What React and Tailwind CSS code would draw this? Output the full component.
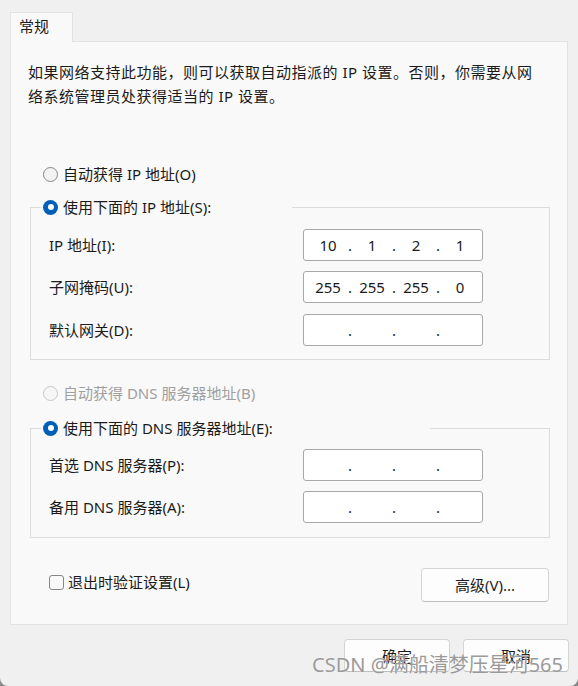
import React from "react";

const font = "font-['Noto_Sans','Noto_Sans_CJK_SC',sans-serif]";

function Radio({ checked, disabled }) {
  if (checked) {
    return (
      <span className="flex h-[15px] w-[15px] shrink-0 items-center justify-center rounded-full bg-[#005fb8]">
        <span className="h-[6px] w-[6px] rounded-full bg-white" />
      </span>
    );
  }
  return (
    <span
      className={
        disabled
          ? "h-[15px] w-[15px] shrink-0 rounded-full border border-[#c8c8c8] bg-[#f6f6f6]"
          : "h-[15px] w-[15px] shrink-0 rounded-full border border-[#878787] bg-[#f3f3f3]"
      }
    />
  );
}

function RadioRow({ checked, disabled, children }) {
  return (
    <div className="flex h-[20px] items-center gap-[5px]">
      <Radio checked={checked} disabled={disabled} />
      <span className={disabled ? "text-[#a0a0a0]" : ""}>{children}</span>
    </div>
  );
}

function IpField({ parts = ["", "", "", ""] }) {
  return (
    <div className="flex h-[32px] w-[180px] items-center rounded-[3px] border border-[#a8a8a8] bg-white pl-[6px]">
      {parts.map((p, i) => (
        <React.Fragment key={i}>
          <span className="w-[36px] text-center">{p}</span>
          {i < 3 && <span className="w-[8px] text-center">.</span>}
        </React.Fragment>
      ))}
    </div>
  );
}

function FieldRow({ label, parts, className = "" }) {
  return (
    <div className={`flex items-center ${className}`}>
      <span className="w-[254px]">{label}</span>
      <IpField parts={parts} />
    </div>
  );
}

function Button({ children, className = "" }) {
  return (
    <button
      className={`flex items-center justify-center rounded-[4px] border border-[#d4d4d4] border-b-[#bdbdbd] bg-[#fdfdfd] text-[15px] text-[#1b1b1b] ${className}`}
    >
      {children}
    </button>
  );
}

export default function App() {
  return (
    <div className={`h-[686px] w-[578px] bg-[#8a8a8a] ${font}`}>
      <div className="relative flex h-full w-full flex-col overflow-hidden rounded-b-[8px] bg-[#f0f0f0] text-[15px] leading-[24px] text-[#1b1b1b]">
        <div className="px-[10px] pt-[12px]">
          <div className="relative z-10 -mb-px h-[30px] w-[63px] border border-b-0 border-[#e2e2e2] bg-[#f9f9f9] pl-[8px] pt-[1px]">
            常规
          </div>
          <div className="h-[584px] w-[558px] border border-[#e2e2e2] bg-[#f9f9f9] pt-[18px]">
            <p className="whitespace-nowrap pl-[17px] tracking-[0.5px]">
              如果网络支持此功能，则可以获取自动指派的 IP 设置。否则，你需要从网
              <br />
              络系统管理员处获得适当的 IP 设置。
            </p>

            <div className="mt-[56px] pl-[32px]">
              <RadioRow>自动获得 IP 地址(O)</RadioRow>
            </div>

            <fieldset className="ml-[19px] mt-[13px] w-[520px] border border-[#dcdcdc] pb-[13px] pt-[12px]">
              <legend className="ml-[10px] w-[251px] pl-[2px]">
                <RadioRow checked>使用下面的 IP 地址(S):</RadioRow>
              </legend>
              <div className="pl-[18px]">
                <FieldRow label="IP 地址(I):" parts={["10", "1", "2", "1"]} />
                <FieldRow className="mt-[10px]" label="子网掩码(U):" parts={["255", "255", "255", "0"]} />
                <FieldRow className="mt-[11px]" label="默认网关(D):" />
              </div>
            </fieldset>

            <div className="mt-[23px] pl-[32px]">
              <RadioRow disabled>自动获得 DNS 服务器地址(B)</RadioRow>
            </div>

            <fieldset className="ml-[19px] mt-[15px] w-[520px] border border-[#dcdcdc] pb-[14px] pt-[11px]">
              <legend className="ml-[10px] w-[389px] pl-[2px]">
                <RadioRow checked>使用下面的 DNS 服务器地址(E):</RadioRow>
              </legend>
              <div className="pl-[18px]">
                <FieldRow label="首选 DNS 服务器(P):" />
                <FieldRow className="mt-[10px]" label="备用 DNS 服务器(A):" />
              </div>
            </fieldset>

            <div className="mt-[30px] flex items-start justify-between pl-[38px] pr-[18px]">
              <label className="mt-[2px] flex items-center gap-[4px]">
                <span className="h-[15px] w-[15px] rounded-[3px] border border-[#878787] bg-[#f8f8f8]" />
                <span>退出时验证设置(L)</span>
              </label>
              <Button className="h-[34px] w-[128px]">高级(V)...</Button>
            </div>
          </div>
        </div>

        <div className="mt-[14px] flex justify-end gap-[13px] pr-[9px]">
          <Button className="h-[33px] w-[106px]">确定</Button>
          <Button className="h-[33px] w-[106px]">取消</Button>
        </div>

        <div className="absolute bottom-[9px] right-[15px] text-[20px] leading-[24px] text-[#9a9a9a] [text-shadow:0_0_1px_#ffffff]">
          CSDN @满船清梦压星河565
        </div>
      </div>
    </div>
  );
}
